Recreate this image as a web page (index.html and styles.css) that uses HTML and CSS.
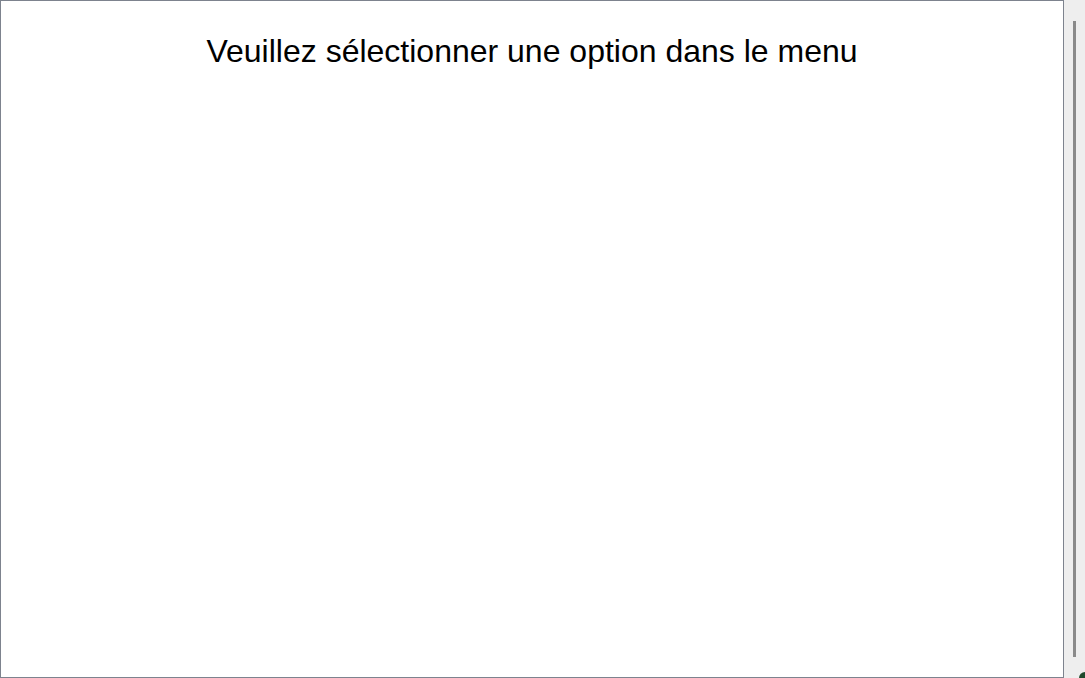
FILE: index.html
```html
<!DOCTYPE html>
<html lang="fr">
<head>
<meta charset="utf-8">
<title>Menu</title>
<link rel="stylesheet" href="styles.css">
</head>
<body>
<div class="app">
  <main class="frame">
    <h1 class="message">Veuillez sélectionner une option dans le menu</h1>
  </main>
  <div class="scrollbar">
    <div class="thumb"></div>
    <div class="corner"></div>
  </div>
</div>
</body>
</html>
```
FILE: styles.css
```css
html, body {
  margin: 0;
  padding: 0;
  background: #ffffff;
  overflow: hidden;
}
.app {
  display: flex;
  width: 1085px;
  height: 678px;
}
.frame {
  box-sizing: border-box;
  width: 1064px;
  height: 678px;
  border: 1px solid #7d838e;
  background: #ffffff;
}
.message {
  margin: 0;
  padding-top: 32px;
  text-align: center;
  font-family: "Liberation Sans", Arial, sans-serif;
  font-weight: normal;
  font-size: 32px;
  line-height: 36px;
  color: #000000;
}
.scrollbar {
  position: relative;
  flex: 1;
  background: #eeeeee;
  display: flex;
  justify-content: flex-start;
  padding-left: 9px;
  padding-top: 21px;
  padding-bottom: 21px;
  box-sizing: border-box;
}
.thumb {
  width: 3px;
  height: 636px;
  background: #8a8a8a;
}
.corner {
  position: absolute;
  right: 0;
  bottom: 0;
  width: 6px;
  height: 6px;
  background: #1f4a2c;
  border-top-left-radius: 6px;
}
```
